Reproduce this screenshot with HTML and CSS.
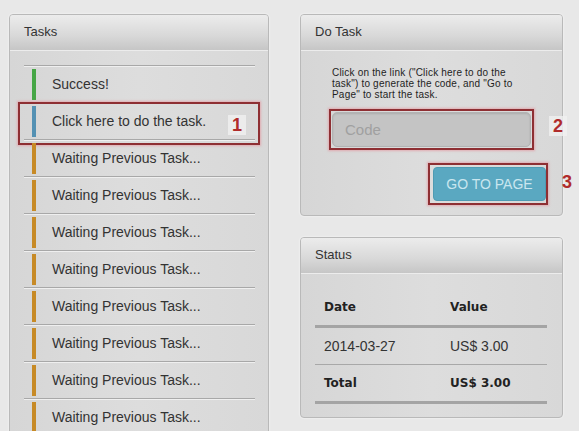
FILE: index.html
```html
<!DOCTYPE html>
<html>
<head>
<title>Tasks</title>
<link rel="stylesheet" href="styles.css">
</head>
<body>

<div class="page">
  <div class="panel tasks-panel">
    <div class="panel-heading">Tasks</div>
    <div class="panel-body">
      <ul class="task-list">
        <li class="task done">Success!</li>
        <li class="task current">
          Click here to do the task.
          <span class="mark mark-1"></span>
          <span class="num num-1">1</span>
        </li>
        <li class="task waiting">Waiting Previous Task...</li>
        <li class="task waiting">Waiting Previous Task...</li>
        <li class="task waiting">Waiting Previous Task...</li>
        <li class="task waiting">Waiting Previous Task...</li>
        <li class="task waiting">Waiting Previous Task...</li>
        <li class="task waiting">Waiting Previous Task...</li>
        <li class="task waiting">Waiting Previous Task...</li>
        <li class="task waiting">Waiting Previous Task...</li>
      </ul>
    </div>
  </div>

  <div class="side">
    <div class="panel">
      <div class="panel-heading">Do Task</div>
      <div class="panel-body do-task">
        <p class="hint">Click on the link ("Click here to do the task") to generate the code, and "Go to Page" to start the task.</p>
        <div class="code-wrap">
          <input class="code" type="text" placeholder="Code">
          <span class="mark mark-2"></span>
          <span class="num num-2">2</span>
        </div>
        <div class="actions">
          <div class="go-wrap">
            <button class="go">GO TO PAGE</button>
            <span class="mark mark-3"></span>
            <span class="num num-3">3</span>
          </div>
        </div>
      </div>
    </div>

    <div class="panel">
      <div class="panel-heading">Status</div>
      <div class="panel-body status">
        <table class="status-table">
          <tr class="head">
            <th>Date</th>
            <th>Value</th>
          </tr>
          <tr>
            <td>2014-03-27</td>
            <td>US$ 3.00</td>
          </tr>
          <tr class="total">
            <th>Total</th>
            <th>US$ 3.00</th>
          </tr>
        </table>
      </div>
    </div>
  </div>
</div>

</body>
</html>
```

FILE: styles.css
```css
body {
  margin: 0;
  height: 100vh;
  overflow: hidden;
  background-color: #e8e8e8;
  font-family: "Liberation Sans", Arial, sans-serif;
  color: #333;
}

.page {
  display: flex;
  align-items: flex-start;
  gap: 31px;
  padding: 14px 0 0 9px;
}

.panel {
  border: 1px solid #b9b9b9;
  border-radius: 4px;
  background: linear-gradient(to right, #d6d6d6, #dddddd 50%, #d8d8d8);
  box-shadow: 0 0 2px rgba(255, 255, 255, 0.9);
}

.tasks-panel {
  width: 258px;
}

.side {
  width: 263px;
  display: flex;
  flex-direction: column;
  gap: 21px;
}

.panel-heading {
  height: 35px;
  line-height: 34px;
  padding-left: 14px;
  font-size: 13px;
  color: #333;
  background: linear-gradient(to bottom, #ececec, #d8d8d8 60%, #c6c6c6);
  border-bottom: 1px solid #ececec;
  border-radius: 3px 3px 0 0;
}

.tasks-panel .panel-body {
  padding: 14px 13px 0 14px;
}

.task-list {
  list-style: none;
  margin: 0;
  padding: 0;
  border-top: 1px solid #a8a8a8;
  box-shadow: inset 0 1px 0 #efefef;
}

.task {
  position: relative;
  height: 36px;
  line-height: 36px;
  padding-left: 28px;
  font-size: 14px;
  border-bottom: 1px solid #a8a8a8;
  box-shadow: inset 0 1px 0 #efefef;
}

.task::before {
  content: "";
  position: absolute;
  left: 8px;
  top: 3px;
  width: 4px;
  height: 31px;
}

.done::before { background-color: #46a646; }
.current::before { background-color: #5491b3; }
.waiting::before { background-color: #c78a26; }

/* annotation marks */
.mark {
  position: absolute;
  border: 2px solid #8e2f33;
  box-shadow: 0 0 2px 1px rgba(230, 140, 150, 0.6);
  pointer-events: none;
}

.num {
  position: absolute;
  font-size: 18px;
  font-weight: bold;
  line-height: 20px;
  color: #b02b2b;
  padding: 0 4px;
  background-color: rgba(240, 240, 240, 0.8);
}

.mark-1 {
  left: -6px;
  top: -1px;
  width: 238px;
  height: 39px;
}

.num-1 {
  left: 204px;
  top: 12px;
}

.do-task {
  padding: 16px 16px 14px 31px;
}

.hint {
  width: 188px;
  margin: 0;
  font-size: 10px;
  line-height: 11px;
  letter-spacing: 0.2px;
  color: #1e1e1e;
}

.code-wrap {
  position: relative;
  width: 199px;
  margin-top: 12px;
}

.code {
  display: block;
  box-sizing: border-box;
  width: 199px;
  height: 35px;
  padding: 0 12px;
  font-family: "Liberation Sans", Arial, sans-serif;
  font-size: 15px;
  background-color: #c4c4c4;
  border: 1px solid #b3b3b3;
  border-radius: 5px;
  box-shadow: inset 0 1px 2px rgba(0, 0, 0, 0.12);
}

.code::placeholder {
  color: #a0a0a0;
}

.mark-2 {
  left: -3px;
  top: -3px;
  width: 201px;
  height: 37px;
}

.num-2 {
  left: 217px;
  top: 4px;
}

.actions {
  display: flex;
  justify-content: flex-end;
  margin-top: 20px;
}

.go-wrap {
  position: relative;
}

.go {
  display: block;
  width: 113px;
  height: 34px;
  padding: 0;
  font-family: "Liberation Sans", Arial, sans-serif;
  font-size: 14px;
  color: #c9e6ef;
  background-color: #5aa8c1;
  border: 1px solid #4f9bb3;
  border-radius: 4px;
}

.mark-3 {
  left: -5px;
  top: -4px;
  width: 116px;
  height: 38px;
}

.num-3 {
  left: 125px;
  top: 5px;
  background: none;
}

.status {
  padding: 14px 15px 13px 14px;
}

.status-table {
  width: 232px;
  border-collapse: collapse;
}

.status-table th,
.status-table td {
  text-align: left;
  padding: 0 0 0 9px;
  height: 36px;
}

.status-table th {
  font-family: "DejaVu Sans", Verdana, sans-serif;
  font-size: 12px;
  font-weight: bold;
  color: #222;
}

.status-table td {
  font-size: 14px;
  color: #333;
}

.status-table th:first-child,
.status-table td:first-child {
  width: 117px;
}

.status-table tr {
  border-bottom: 1px solid #a8a8a8;
}

.status-table tr.head,
.status-table tr.total {
  border-bottom: 3px solid #a4a4a4;
}

.status-table tr.head th {
  height: 37px;
}
```
